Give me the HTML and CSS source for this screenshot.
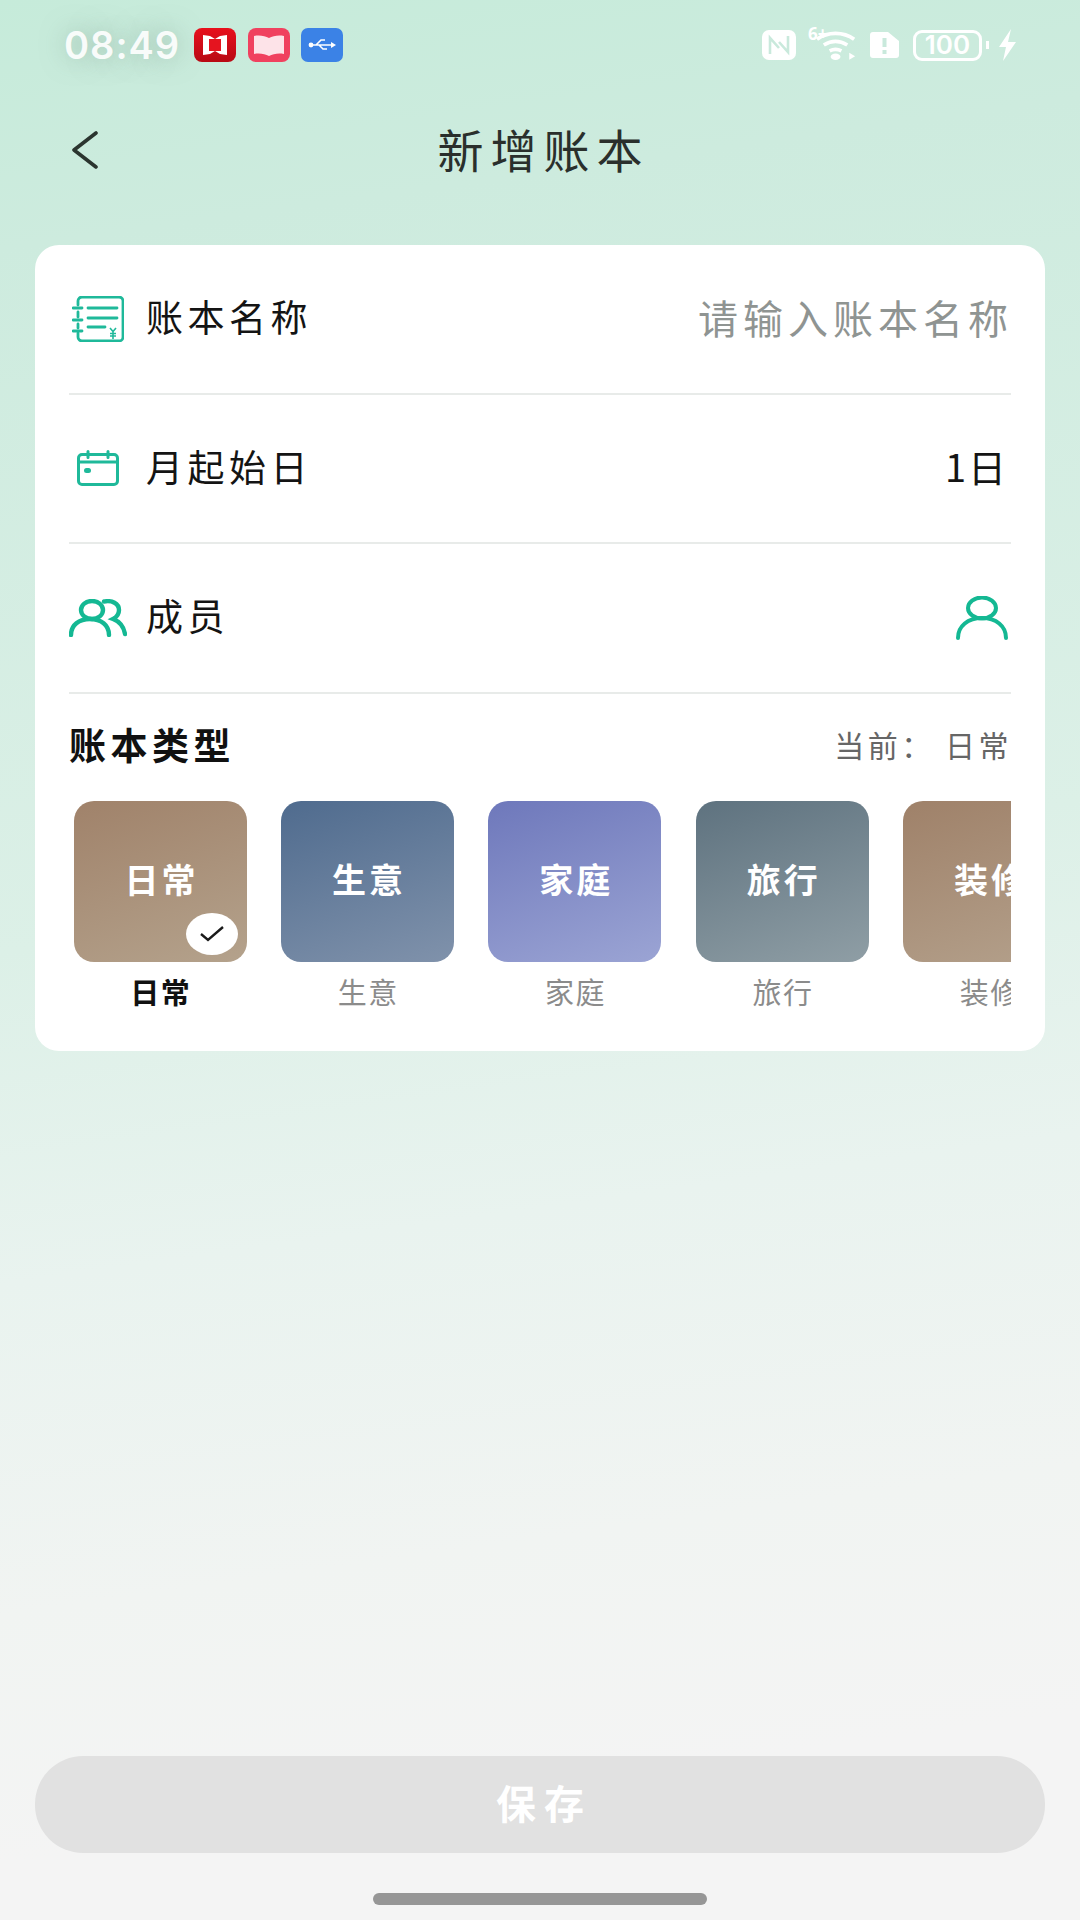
FILE: index.html
```html
<!DOCTYPE html>
<html lang="zh-CN">
<head>
<meta charset="utf-8">
<title>新增账本</title>
<link rel="stylesheet" href="styles.css">
</head>
<body>
<div class="page">
  <header class="status">
    <div class="status-left">
      <span class="time">08:49</span>
      <svg class="app" viewBox="0 0 42 34"><defs><linearGradient id="rd" x1="0" y1="0" x2="0" y2="1"><stop offset="0" stop-color="#e8101c"/><stop offset="1" stop-color="#b80a14"/></linearGradient></defs><rect width="42" height="34" rx="8" fill="url(#rd)"/><path d="M9 7l7 1 5 3 5-3 7-1v20l-7-1-5-3-5 3-7 1z" fill="#fff"/><rect x="15" y="11" width="12" height="12" fill="#e5141f"/></svg>
      <svg class="app" viewBox="0 0 42 34"><rect width="42" height="34" rx="8" fill="#f0415f"/><path d="M6 8c6-1 11 0 15 2 4-2 9-3 15-2v18c-6-1-11 0-15 2-4-2-9-3-15-2z" fill="#fde3e8"/></svg>
      <svg class="app" viewBox="0 0 42 34"><rect width="42" height="34" rx="7" fill="#3b82e6"/><path d="M9 17h22M15 17l5-5h4M18 17l4 4h4" fill="none" stroke="#fff" stroke-width="1.600"/><circle cx="10" cy="17" r="2.400" fill="#fff"/><path d="M30 14l5 3-5 3z" fill="#fff"/></svg>
    </div>
    <div class="status-right">
      <svg class="i-nfc" viewBox="0 0 34 30"><rect width="34" height="30" rx="7" fill="#fff"/><path d="M8 24V8l9 10M26 6v16l-9-10" fill="none" stroke="#c9e9dc" stroke-width="2.600"/></svg>
      <span class="wifi"><span class="six">6+</span><svg class="i-wifi" viewBox="0 0 46 30"><path d="M2 8c11-8 27-8 38 0M9 14c8-5 16-5 24 0M15 20c4-2 8-2 12 0" fill="none" stroke="#fff" stroke-width="3.800"/><ellipse cx="21" cy="26" rx="5" ry="3.400" fill="#fff"/><path d="M35 22l6 3.500-6 3.500z" fill="#fff"/></svg></span>
      <svg class="i-sim" viewBox="0 0 29 26"><path d="M3 0h15l11 9v14a3 3 0 0 1-3 3H3a3 3 0 0 1-3-3V3a3 3 0 0 1 3-3z" fill="#fff"/><rect x="12.500" y="6" width="4" height="9" fill="#c9e9dc"/><rect x="12.500" y="18" width="4" height="4" fill="#c9e9dc"/></svg>
      <span class="battery">100</span>
      <span class="nub"></span>
      <svg class="i-bolt" viewBox="0 0 18 32"><path d="M13 0L1 18h7L5 32 18 13h-8z" fill="#fff"/></svg>
    </div>
  </header>

  <nav class="nav">
    <svg class="back" viewBox="0 0 27 38"><path d="M25 2L3 19l22 17" fill="none" stroke="#2b352f" stroke-width="3.600" stroke-linecap="round" stroke-linejoin="round"/></svg>
    <h1 class="title">新增账本</h1>
    <span></span>
  </nav>

  <main class="card">
    <div class="row">
      <span class="slot">
        <svg class="ico-book" viewBox="0 0 52 46"><g fill="none" stroke="#1fb99a" stroke-width="2.800" stroke-linecap="round"><path d="M6 9V5a4 4 0 0 1 4-4h37a4 4 0 0 1 4 4v36a4 4 0 0 1-4 4H10a4 4 0 0 1-4-4v-4M6 16v5M6 28v4"/><path d="M1 12h9M1 24h9M1 35h9M16 12h29M16 22h29M16 31h17"/></g><path d="M38 32l3 3.500 3-3.500M41 36v7M38 37.500h6M38 40h6" fill="none" stroke="#1fb99a" stroke-width="1.600"/></svg>
      </span>
      <span class="label">账本名称</span>
      <span class="placeholder">请输入账本名称</span>
    </div>
    <div class="row">
      <span class="slot">
        <svg class="ico-cal" viewBox="0 0 42 36"><g fill="none" stroke="#1fb99a" stroke-width="3" stroke-linecap="round"><rect x="1.500" y="4.500" width="39" height="30" rx="3.500"/><path d="M11 1.500v6M31 1.500v6M1.500 12h39"/></g><rect x="7" y="18" width="7" height="5" rx="2.500" fill="#1fb99a"/></svg>
      </span>
      <span class="label">月起始日</span>
      <span class="value">1日</span>
    </div>
    <div class="row">
      <span class="slot">
        <svg class="ico-people" viewBox="0 0 58 38"><g fill="none" stroke="#14b893" stroke-width="4.400" stroke-linecap="round"><ellipse cx="23" cy="11" rx="11" ry="9"/><path d="M2 36c0-10 8-16 19-16s19 6 19 16"/><path d="M35 2.500c8-1.500 15 2 15 8.500 0 4-2 7-6 9 8 3 11 9 12 15"/></g></svg>
      </span>
      <span class="label">成员</span>
      <svg class="ico-person" viewBox="0 0 52 44"><g fill="none" stroke="#14b893" stroke-width="4" stroke-linecap="round"><ellipse cx="26" cy="12" rx="14" ry="10.500"/><path d="M2 42C2 30 12 22 26 22s24 8 24 20"/></g></svg>
    </div>
    <section class="types">
      <div class="types-head">
        <h2 class="types-title">账本类型</h2>
        <span class="current">当前： 日常</span>
      </div>
      <div class="tiles">
        <div class="tile-col">
          <div class="tile brown">日常
            <span class="check"><svg class="check-mark" viewBox="0 0 26 18"><path d="M2 9l7 6L24 2" fill="none" stroke="#1a1a1a" stroke-width="2.400"/></svg></span>
          </div>
          <span class="tile-label on">日常</span>
        </div>
        <div class="tile-col"><div class="tile blue">生意</div><span class="tile-label">生意</span></div>
        <div class="tile-col"><div class="tile violet">家庭</div><span class="tile-label">家庭</span></div>
        <div class="tile-col"><div class="tile slate">旅行</div><span class="tile-label">旅行</span></div>
        <div class="tile-col"><div class="tile tan">装修</div><span class="tile-label">装修</span></div>
      </div>
    </section>
  </main>

  <footer class="footer">
    <button class="save" type="button">保存</button>
    <span class="home"></span>
  </footer>
</div>
</body>
</html>
```

FILE: styles.css
```css
* { box-sizing: border-box; }
html, body { margin: 0; padding: 0; }
body { font-family: "Noto Sans CJK SC", "Noto Sans", sans-serif; color: #111; }
.page {
  width: 1080px; height: 1920px; overflow: hidden;
  display: flex; flex-direction: column;
  background: linear-gradient(172deg, #c6ebda 0%, #cdebde 12%, #dcf0e7 46%, #e9f3ef 62%, #f1f4f2 78%, #f4f4f4 90%);
}
.status {
  height: 90px; flex: none; padding: 0 64px;
  display: flex; justify-content: space-between; align-items: center;
}
.status-left, .status-right { display: flex; align-items: center; }
.time {
  font-family: "Inter", sans-serif; font-size: 38px; font-weight: 600; line-height: 1;
  color: rgba(255,255,255,.92); letter-spacing: 1px; margin-right: 14px;
  text-shadow: 0 0 24px rgba(120,150,135,.55);
}
.app { width: 42px; height: 34px; margin-right: 11.500px; }
.i-nfc { width: 34px; height: 30px; margin-right: 12px; }
.wifi { display: flex; align-items: flex-start; width: 52px; height: 34px; margin-right: 10px; position: relative; }
.six { position: absolute; left: 0; top: -3px; color: #fff; font-size: 17px; line-height: 1; font-family: "Open Sans", sans-serif; font-weight: 700; }
.i-wifi { width: 46px; height: 30px; margin-left: 7px; margin-top: 3px; }
.i-sim { width: 29px; height: 26px; margin-right: 14px; }
.battery {
  width: 69px; height: 31px; border: 3px solid #fff; border-radius: 9px;
  display: flex; align-items: center; justify-content: center;
  font-family: "Inter", sans-serif; font-weight: 600; font-size: 26px; line-height: 1; color: #fff;
}
.nub { width: 3px; height: 8px; background: #fff; margin: 0 9px 0 4px; }
.i-bolt { width: 18px; height: 32px; }

.nav {
  height: 120px; flex: none; padding: 0 71px;
  display: grid; grid-template-columns: 1fr auto 1fr; align-items: center;
}
.back { width: 27px; height: 38px; }
.title { margin: 0; padding-bottom: 4px; font-size: 46px; font-weight: 400; letter-spacing: 7px; text-indent: 7px; color: #2a2f2c; line-height: 1; }

.card {
  flex: none; height: 806px; margin: 35px 35px 0; padding: 0 34px;
  background: #fff; border-radius: 24px;
}
.row {
  height: 149.500px; border-bottom: 2px solid #e8ebe9;
  display: flex; align-items: center;
}
.slot { width: 58px; margin-right: 19px; display: flex; justify-content: center; align-items: center; }
.ico-book { width: 52px; height: 46px; }
.ico-cal { width: 42px; height: 36px; }
.ico-people { width: 58px; height: 38px; }
.ico-person { width: 52px; height: 44px; margin-left: auto; margin-right: 3px; }
.label { padding-bottom: 4px; font-size: 37px; letter-spacing: 4.500px; line-height: 1; color: #141414; }
.placeholder { margin-left: auto; margin-right: -2px; padding-bottom: 4px; font-size: 40px; letter-spacing: 5px; line-height: 1; color: #8f9492; }
.value { margin-left: auto; margin-right: 3px; padding-bottom: 4px; font-size: 38px; letter-spacing: 2px; line-height: 1; color: #141414; }

.types { padding-top: 31px; }
.types-head { display: flex; justify-content: space-between; align-items: center; height: 44px; }
.types-title { margin: 0; padding-bottom: 4px; font-size: 37px; font-weight: 700; letter-spacing: 4.500px; line-height: 1; color: #111; }
.current { margin-right: -1px; padding-bottom: 5px; font-size: 30px; letter-spacing: 3.500px; line-height: 1; color: #666; white-space: pre; }
.tiles { display: flex; gap: 34.400px; padding: 32px 0 14px 4.500px; overflow: hidden; }
.tile-col { flex: none; width: 173px; display: flex; flex-direction: column; align-items: center; }
.tile {
  position: relative; width: 173px; height: 161px; border-radius: 20px; padding-bottom: 6px;
  display: flex; align-items: center; justify-content: center;
  color: #fff; font-size: 34px; font-weight: 700; letter-spacing: 3px; text-indent: 3px;
}
.brown { background: linear-gradient(160deg, #a0826a, #b4a28c); }
.blue { background: linear-gradient(160deg, #4f6b8e, #8092ab); }
.violet { background: linear-gradient(160deg, #6e78bb, #9ba4d4); }
.slate { background: linear-gradient(160deg, #5e727f, #8f9ea5); }
.tan { background: linear-gradient(160deg, #9f8169, #b4a18c); }
.check {
  position: absolute; right: 9px; bottom: 7px; width: 52px; height: 42px; border-radius: 50%;
  background: #fff; display: flex; align-items: center; justify-content: center; text-indent: 0;
}
.check-mark { width: 26px; height: 18px; }
.tile-label { margin-top: 14px; font-size: 29px; line-height: 30px; letter-spacing: 1.500px; text-indent: 1.500px; color: #8b8b8b; white-space: nowrap; }
.tile-label.on { color: #111; font-weight: 700; }

.footer { margin-top: auto; display: flex; flex-direction: column; align-items: center; padding: 0 35px 15px; }
.save {
  width: 100%; height: 97px; border: 0; border-radius: 48px; background: #e1e1e1; padding: 0 0 5px;
  color: #fff; font-family: inherit; font-size: 40px; font-weight: 700; letter-spacing: 8px; text-indent: 8px;
}
.home { width: 334px; height: 12px; margin-top: 40px; border-radius: 6px; background: #969696; }
```
